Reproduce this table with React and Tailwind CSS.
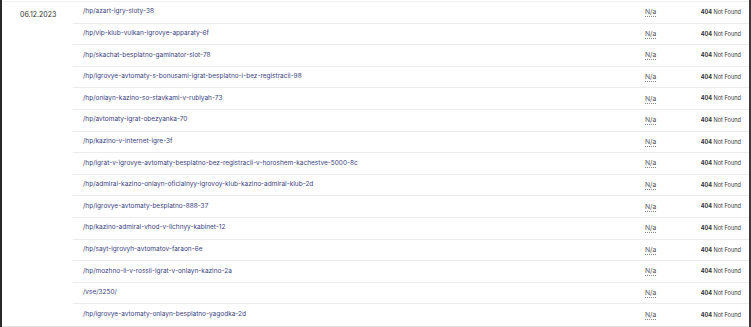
import React from "react";

const paths = [
  "/hp/azart-igry-sloty-38",
  "/hp/vip-klub-vulkan-igrovye-apparaty-6f",
  "/hp/skachat-besplatno-gaminator-slot-78",
  "/hp/igrovye-avtomaty-s-bonusami-igrat-besplatno-i-bez-registracii-98",
  "/hp/onlayn-kazino-so-stavkami-v-rublyah-73",
  "/hp/avtomaty-igrat-obezyanka-70",
  "/hp/kazino-v-internet-igre-3f",
  "/hp/igrat-v-igrovye-avtomaty-besplatno-bez-registracii-v-horoshem-kachestve-5000-8c",
  "/hp/admiral-kazino-onlayn-oficialnyy-igrovoy-klub-kazino-admiral-klub-2d",
  "/hp/igrovye-avtomaty-besplatno-888-37",
  "/hp/kazino-admiral-vhod-v-lichnyy-kabinet-12",
  "/hp/sayt-igrovyh-avtomatov-faraon-6e",
  "/hp/mozhno-li-v-rossii-igrat-v-onlayn-kazino-2a",
  "/vse/3250/",
  "/hp/igrovye-avtomaty-onlayn-besplatno-yagodka-2d",
];

export default function App() {
  return (
    <div
      className="w-[751px] h-[327px] bg-white border-l-2 border-r-2 border-l-[#2a2a2a] border-r-[#3a3a3a] overflow-hidden pt-[1px]"
      style={{ fontFamily: "Inter, 'Noto Sans', sans-serif" }}
    >
      <div className="flex border-t border-[#f0f0f0] border-b border-b-[#e2e2e2]">
        <div className="w-[71px] shrink-0 pl-[18px] pt-[8px] text-[7px] text-[#333] leading-[9px]">
          06.12.2023
        </div>
        <div className="flex-1 flex flex-col">
          {paths.map((p, i) => (
            <div
              key={i}
              className={
                "h-[21.6px] flex items-center text-[6.5px] " +
                (i < paths.length - 1 ? "border-b border-[#ececec]" : "")
              }
            >
              <div className="flex-1 pl-[10px] text-[#3b4180] whitespace-nowrap">{p}</div>
              <div className="w-[52px] text-[#555] text-[6.8px]">
                <span className="border-b border-dotted border-[#888]">N/a</span>
              </div>
              <div className="w-[52px] pr-[8px] text-right text-[5.6px] text-[#333] whitespace-nowrap">
                <span className="font-bold">404</span> Not Found
              </div>
            </div>
          ))}
        </div>
      </div>
    </div>
  );
}
